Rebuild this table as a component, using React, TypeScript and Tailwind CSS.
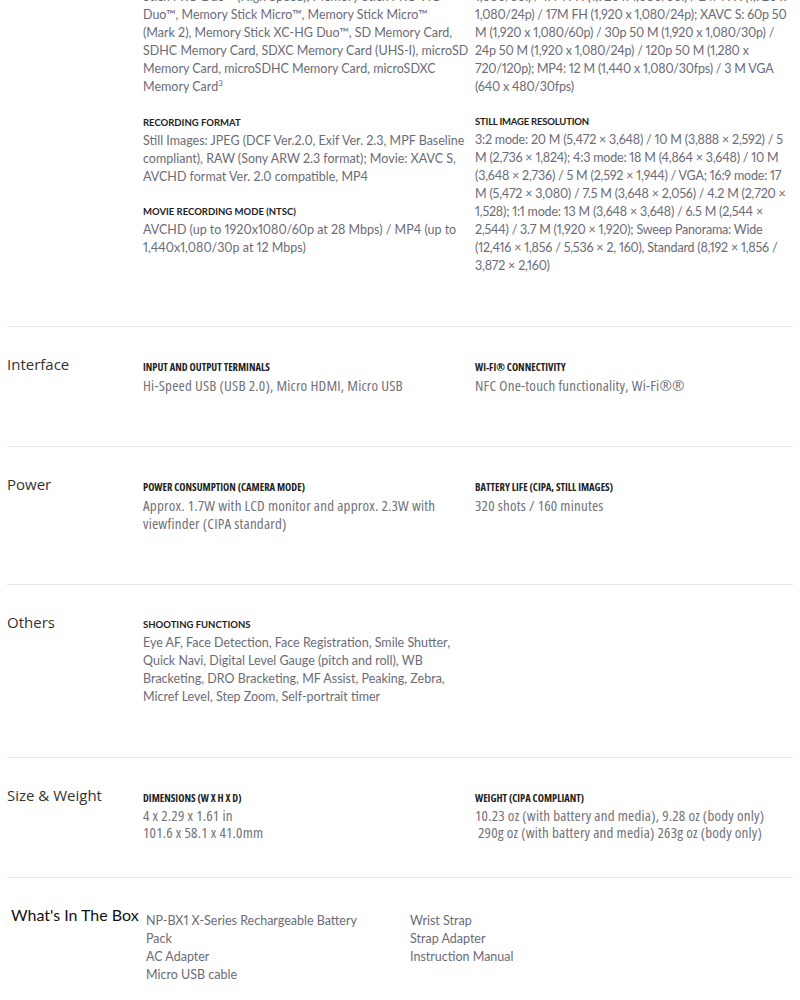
import React from "react";

const body = "font-['Lato',sans-serif] proportional-nums text-[12.5px] leading-[18px] text-[#6b6b78]";
const head = "font-['Lato',sans-serif] font-bold uppercase text-[9.5px] leading-[18px] text-[#222]";
const cBody = "font-['Open_Sans',sans-serif] font-stretch-condensed text-[15px] tracking-[0.2px] leading-[18px] text-[#727279]";
const cHead = "font-['Open_Sans',sans-serif] font-stretch-condensed font-bold uppercase text-[10.5px] leading-[18px] text-[#222]";
const title = "font-['Open_Sans',sans-serif] text-[15px] leading-[16px] text-[#333] mt-[-2px]";

type Spec = { label: string; lines: string[] };

function Lines({ lines }: { lines: string[] }) {
  return (
    <>
      {lines.map((l, i) => (
        <div key={i} className="whitespace-pre">
          {l}
        </div>
      ))}
    </>
  );
}

function Item({
  spec,
  condensed,
  gap,
  tight,
}: {
  spec: Spec;
  condensed?: boolean;
  gap?: boolean;
  tight?: boolean;
}) {
  return (
    <div className={gap ? "mt-[17px]" : ""}>
      <div className={condensed ? cHead : head}>{spec.label}</div>
      <div className={(condensed ? cBody : body) + (tight ? " !leading-[17px]" : "")}>
        <Lines lines={spec.lines} />
      </div>
    </div>
  );
}

function Row({
  name,
  left,
  right,
  condensed,
  tight,
  pad,
}: {
  name: string;
  left: Spec[];
  right: Spec[];
  condensed?: boolean;
  tight?: boolean;
  pad: string;
}) {
  return (
    <div className={"flex border-b border-[#e9e9ec] " + pad}>
      <div className={"w-[136px] shrink-0 " + title}>{name}</div>
      <div className="grid grid-cols-[332px_318px]">
        <div>
          {left.map((s, i) => (
            <Item key={i} spec={s} condensed={condensed} tight={tight} gap={i > 0} />
          ))}
        </div>
        <div>
          {right.map((s, i) => (
            <Item key={i} spec={s} condensed={condensed} tight={tight} gap={i > 0} />
          ))}
        </div>
      </div>
    </div>
  );
}

const media = [
  "Stick PRO Duo™ (High Speed), Memory Stick PRO-HG",
  "Duo™, Memory Stick Micro™, Memory Stick Micro™",
  "(Mark 2), Memory Stick XC-HG Duo™, SD Memory Card,",
  "SDHC Memory Card, SDXC Memory Card (UHS-I), microSD",
  "Memory Card, microSDHC Memory Card, microSDXC",
];

const movie = [
  "1,080/60i) / 17M FH (1,920 x 1,080/60i) / 24M FX (1,920 x",
  "1,080/24p) / 17M FH (1,920 x 1,080/24p); XAVC S: 60p 50",
  "M (1,920 x 1,080/60p) / 30p 50 M (1,920 x 1,080/30p) /",
  "24p 50 M (1,920 x 1,080/24p) / 120p 50 M (1,280 x",
  "720/120p); MP4: 12 M (1,440 x 1,080/30fps) / 3 M VGA",
  "(640 x 480/30fps)",
];

export default function App() {
  return (
    <div className="min-h-[1000px] bg-white px-[7px] overflow-hidden">
      {/* recording section, scrolled partly out of view */}
      <div className="flex border-b border-[#e9e9ec] mt-[-12px] pb-[51px]">
        <div className="w-[136px] shrink-0" />
        <div className="grid grid-cols-[332px_318px]">
          <div>
            <div className={body}>
              <Lines lines={media} />
              <div>
                Memory Card<span className="relative top-[-5px] text-[8px]">3</span>
              </div>
            </div>
            <Item
              gap
              spec={{
                label: "Recording Format",
                lines: [
                  "Still Images: JPEG (DCF Ver.2.0, Exif Ver. 2.3, MPF Baseline",
                  "compliant), RAW (Sony ARW 2.3 format); Movie: XAVC S,",
                  "AVCHD format Ver. 2.0 compatible, MP4",
                ],
              }}
            />
            <Item
              gap
              spec={{
                label: "Movie Recording Mode (NTSC)",
                lines: [
                  "AVCHD (up to 1920x1080/60p at 28 Mbps) / MP4 (up to",
                  "1,440x1,080/30p at 12 Mbps)",
                ],
              }}
            />
          </div>
          <div className="tracking-[-0.2px]">
            <div className={body}>
              <Lines lines={movie} />
            </div>
            <Item
              gap
              spec={{
                label: "Still Image Resolution",
                lines: [
                  "3:2 mode: 20 M (5,472 × 3,648) / 10 M (3,888 × 2,592) / 5",
                  "M (2,736 × 1,824); 4:3 mode: 18 M (4,864 × 3,648) / 10 M",
                  "(3,648 × 2,736) / 5 M (2,592 × 1,944) / VGA; 16:9 mode: 17",
                  "M (5,472 × 3,080) / 7.5 M (3,648 × 2,056) / 4.2 M (2,720 ×",
                  "1,528); 1:1 mode: 13 M (3,648 × 3,648) / 6.5 M (2,544 ×",
                  "2,544) / 3.7 M (1,920 × 1,920); Sweep Panorama: Wide",
                  "(12,416 × 1,856 / 5,536 × 2, 160), Standard (8,192 × 1,856 /",
                  "3,872 × 2,160)",
                ],
              }}
            />
          </div>
        </div>
      </div>

      <Row
        name="Interface"
        condensed
        pad="pt-[31px] pb-[52px]"
        left={[{ label: "Input and Output Terminals", lines: ["Hi-Speed USB (USB 2.0), Micro HDMI, Micro USB"] }]}
        right={[{ label: "Wi-Fi® Connectivity", lines: ["NFC One-touch functionality, Wi-Fi®®"] }]}
      />
      <Row
        name="Power"
        condensed
        pad="pt-[31px] pb-[52px]"
        left={[
          {
            label: "Power Consumption (Camera Mode)",
            lines: ["Approx. 1.7W with LCD monitor and approx. 2.3W with", "viewfinder (CIPA standard)"],
          },
        ]}
        right={[{ label: "Battery Life (CIPA, Still Images)", lines: ["320 shots / 160 minutes"] }]}
      />
      <Row
        name="Others"
        pad="pt-[31px] pb-[51px]"
        left={[
          {
            label: "Shooting Functions",
            lines: [
              "Eye AF, Face Detection, Face Registration, Smile Shutter,",
              "Quick Navi, Digital Level Gauge (pitch and roll), WB",
              "Bracketing, DRO Bracketing, MF Assist, Peaking, Zebra,",
              "Micref Level, Step Zoom, Self-portrait timer",
            ],
          },
        ]}
        right={[]}
      />
      <Row
        name="Size & Weight"
        condensed
        tight
        pad="pt-[31px] pb-[36px]"
        left={[{ label: "Dimensions (W x H x D)", lines: ["4 x 2.29 x 1.61 in", "101.6 x 58.1 x 41.0mm"] }]}
        right={[
          {
            label: "Weight (CIPA Compliant)",
            lines: [
              "10.23 oz (with battery and media), 9.28 oz (body only)",
              " 290g oz (with battery and media) 263g oz (body only)",
            ],
          },
        ]}
      />

      {/* what's in the box */}
      <div className="flex pt-[34px] pl-[4px]">
        <div className="w-[135px] shrink-0 font-['Lato',sans-serif] text-[16px] leading-[16px] text-[#111] mt-[-5px]">
          What's In The Box
        </div>
        <div className={"w-[264px] " + body}>
          <Lines lines={["NP-BX1 X-Series Rechargeable Battery", "Pack", "AC Adapter", "Micro USB cable"]} />
        </div>
        <div className={body}>
          <Lines lines={["Wrist Strap", "Strap Adapter", "Instruction Manual"]} />
        </div>
      </div>
    </div>
  );
}
